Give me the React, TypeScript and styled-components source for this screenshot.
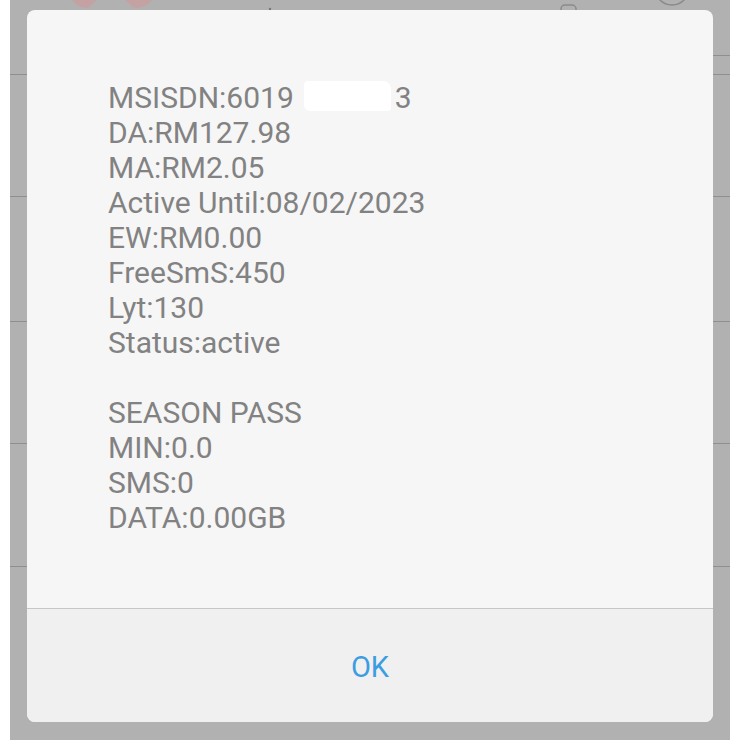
import React from "react";
import styled, { createGlobalStyle } from "styled-components";

const GlobalStyle = createGlobalStyle`
  html, body {
    margin: 0;
    padding: 0;
    background: #ffffff;
  }
  * {
    box-sizing: border-box;
  }
`;

const Page = styled.div`
  width: 740px;
  height: 740px;
  padding: 0 10px;
  background: #ffffff;
  position: relative;
  overflow: hidden;
  font-family: Roboto, "Liberation Sans", sans-serif;
`;

const Backdrop = styled.div`
  width: 100%;
  height: 100%;
  background: #b1b1b1;
  display: flex;
  flex-direction: column;
`;

const ListRow = styled.div<{ $h: number }>`
  height: ${(p) => p.$h}px;
  flex-shrink: 0;
  border-bottom: 1px solid #8f8f8f;
  position: relative;
`;

const HeaderRow = styled(ListRow)`
  display: flex;
  align-items: flex-start;
  justify-content: space-between;
`;

const HeaderRule = styled.div`
  position: absolute;
  right: 0;
  top: 55px;
  width: 40px;
  border-top: 1px solid #8f8f8f;
`;

const Dialog = styled.div`
  position: absolute;
  top: 10px;
  left: 27px;
  width: 686px;
  height: 712px;
  border-radius: 8px;
  overflow: hidden;
  background: #f6f6f6;
  display: flex;
  flex-direction: column;
`;

const Body = styled.div`
  flex: 1;
  padding: 70px 0 0 81px;
`;

const Line = styled.div`
  font-size: 30px;
  line-height: 35px;
  height: 35px;
  color: #828282;
  white-space: nowrap;
`;

const Redacted = styled.span`
  display: inline-block;
  width: 101px;
  height: 30px;
  vertical-align: -3px;
  position: relative;

  &::after {
    content: "";
    position: absolute;
    left: 10px;
    right: 4px;
    top: 0;
    bottom: 0;
    background: #ffffff;
    border-radius: 4px 8px 3px 6px;
  }
`;

const Footer = styled.div`
  height: 114px;
  flex-shrink: 0;
  border-top: 1px solid #c6c6c6;
  background: #f0f0f0;
  display: flex;
  align-items: center;
  justify-content: center;
`;

const OkButton = styled.button`
  background: none;
  border: none;
  padding: 0 20px;
  margin-top: 2px;
  font-family: Roboto, "Liberation Sans", sans-serif;
  font-size: 29px;
  color: #3c9de1;
  cursor: pointer;
`;

const lines = [
  "DA:RM127.98",
  "MA:RM2.05",
  "Active Until:08/02/2023",
  "EW:RM0.00",
  "FreeSmS:450",
  "Lyt:130",
  "Status:active",
  "",
  "SEASON PASS",
  "MIN:0.0",
  "SMS:0",
  "DATA:0.00GB",
];

export default function App() {
  return (
    <>
      <GlobalStyle />
      <Page>
        <Backdrop>
          <HeaderRow $h={75}>
            <svg width="720" height="20" viewBox="0 0 720 20">
              <path d="M62 0 Q68 8 78 8 L87 0 Z" fill="#c4a2a4" />
              <path d="M115 0 L124 8 Q136 8 142 0 Z" fill="#c4a2a4" />
              <circle cx="260" cy="9" r="1.2" fill="#777" />
              <rect x="551" y="5" width="15" height="14" rx="4" fill="none" stroke="#8a8a8a" strokeWidth="1.5" />
              <circle cx="662" cy="-12" r="17" fill="none" stroke="#8a8a8a" strokeWidth="1.5" />
            </svg>
            <HeaderRule />
          </HeaderRow>
          <ListRow $h={122} />
          <ListRow $h={125} />
          <ListRow $h={122} />
          <ListRow $h={123} />
        </Backdrop>
        <Dialog>
          <Body>
            <Line>
              MSISDN:6019
              <Redacted />3
            </Line>
            {lines.map((t, i) => (
              <Line key={i}>{t}</Line>
            ))}
          </Body>
          <Footer>
            <OkButton>OK</OkButton>
          </Footer>
        </Dialog>
      </Page>
    </>
  );
}
